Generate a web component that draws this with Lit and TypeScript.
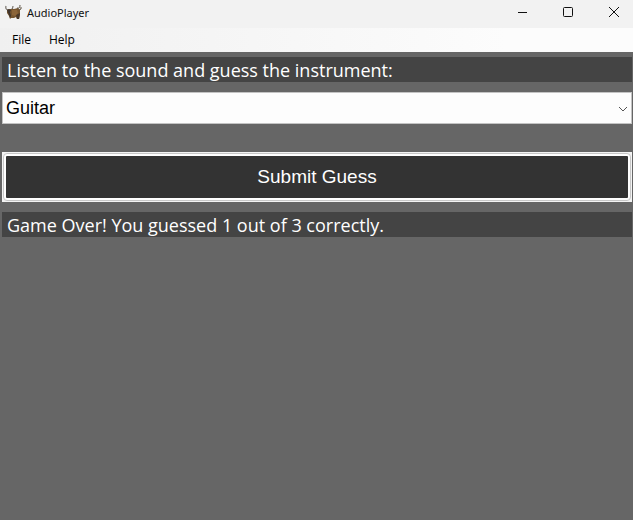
import { LitElement, html, css } from "lit";
import { customElement, state } from "lit/decorators.js";

@customElement("app-root")
export class AppRoot extends LitElement {
  @state() private instrument = "Guitar";

  static styles = css`
    :host {
      display: flex;
      flex-direction: column;
      min-height: 100vh;
      background: #666;
      font-family: "Open Sans", "Noto Sans", sans-serif;
    }
    * {
      box-sizing: border-box;
    }
    button {
      font: inherit;
      border: 0;
      padding: 0;
      margin: 0;
      background: none;
      color: inherit;
    }
    .titlebar {
      display: flex;
      align-items: center;
      height: 28px;
      padding-left: 5px;
      background: #f2f2f2;
      color: #111;
    }
    .logo {
      width: 17px;
      height: 16px;
      margin-right: 5px;
      margin-bottom: 4px;
    }
    .title {
      flex: 1;
      margin: 0;
      font-family: "Noto Sans", sans-serif;
      font-size: 11px;
      font-weight: 400;
      line-height: 16px;
      padding-bottom: 2px;
    }
    .caption {
      display: flex;
      width: 46px;
      height: 24px;
      align-items: center;
      justify-content: center;
    }
    .controls {
      display: flex;
      height: 28px;
      margin-right: -4px;
    }
    .menu {
      display: flex;
      height: 24px;
      padding-left: 8px;
      background: linear-gradient(90deg, #f0f0f0, #fcfcfc 80%);
      color: #000;
      font-size: 12px;
    }
    .menu button {
      padding: 0 4px;
      margin-right: 10px;
      line-height: 24px;
    }
    main {
      display: flex;
      flex-direction: column;
      padding: 5px 1px 0 2px;
    }
    .label {
      display: block;
      height: 25px;
      padding-left: 5px;
      background: #444;
      color: #fff;
      font-size: 18px;
      line-height: 26px;
      white-space: nowrap;
    }
    .picker {
      position: relative;
      margin: 10px 0 28px;
      display: flex;
    }
    select {
      appearance: none;
      flex: 1;
      height: 32px;
      margin: 0;
      padding: 0 24px 0 3px;
      border: 1px solid #c3c3c3;
      border-radius: 0;
      background: #fdfdfd;
      color: #000;
      font: 18px "Liberation Sans", Arial, sans-serif;
      outline: none;
    }
    .chevron {
      position: absolute;
      right: 4px;
      top: 13px;
      pointer-events: none;
    }
    .submit {
      height: 50px;
      margin-bottom: 10px;
      padding: 1px;
      background: #f4f4f4;
    }
    .face {
      display: flex;
      align-items: center;
      justify-content: center;
      height: 48px;
      padding: 2px;
      border: 1px solid #c8c8c8;
      border-radius: 4px;
      background: linear-gradient(#333, #333) content-box, #fff;
      color: #fff;
      font: 19px/24px "Liberation Sans", Arial, sans-serif;
    }
  `;

  private pick(e: Event) {
    this.instrument = (e.target as HTMLSelectElement).value;
  }

  render() {
    return html`
      <header class="titlebar">
        <svg class="logo" viewBox="0 0 17 16" aria-hidden="true">
          <path d="M1 2 Q0 6 4 6 M8 2 Q8 5 6 6" fill="none" stroke="#77716a" stroke-width="1.2" />
          <path d="M2 6 L5 5 L9 5 L13 4 L15 6 L15 11 L14 15 L12 15 L11 13 L9 14 L6 14 L5 15 L4 12 L2 9Z" fill="#76552f" />
          <path d="M2 6 L4 5 L6 6 L5 8 L6 12 L5 14 L4 11Z" fill="#3f352d" />
          <path d="M11 11 L15 9 L14 15 L12 15Z" fill="#49382a" />
          <path d="M7 6 H12 L13 9 L10 12 L7 11Z" fill="#8c6539" />
          <path d="M12 4 Q15 5 15 1 M14 6 L16 5 L16 3" fill="none" stroke="#5d5141" />
        </svg>
        <h1 class="title">AudioPlayer</h1>
        <div class="controls">
          <button class="caption" aria-label="Minimize">
            <svg width="10" height="10" viewBox="0 0 10 10"><path d="M1 5.5H10" stroke="#111" /></svg>
          </button>
          <button class="caption" aria-label="Maximize">
            <svg width="10" height="10" viewBox="0 0 10 10"><rect x=".5" y=".5" width="9" height="9" rx="1" fill="none" stroke="#111" /></svg>
          </button>
          <button class="caption" aria-label="Close">
            <svg width="10" height="10" viewBox="0 0 10 10"><path d="M0 0L10 10M10 0L0 10" stroke="#111" /></svg>
          </button>
        </div>
      </header>
      <nav class="menu">
        <button>File</button>
        <button>Help</button>
      </nav>
      <main>
        <label class="label" for="instrument">Listen to the sound and guess the instrument:</label>
        <div class="picker">
          <select id="instrument" .value=${this.instrument} @change=${this.pick}>
            <option>Guitar</option>
          </select>
          <svg class="chevron" width="10" height="8" viewBox="0 0 10 8" aria-hidden="true">
            <path d="M1 2L5 6L9 2" fill="none" stroke="#555" />
          </svg>
        </div>
        <button class="submit"><span class="face">Submit Guess</span></button>
        <output class="label" for="instrument">Game Over! You guessed 1 out of 3 correctly.</output>
      </main>
    `;
  }
}
